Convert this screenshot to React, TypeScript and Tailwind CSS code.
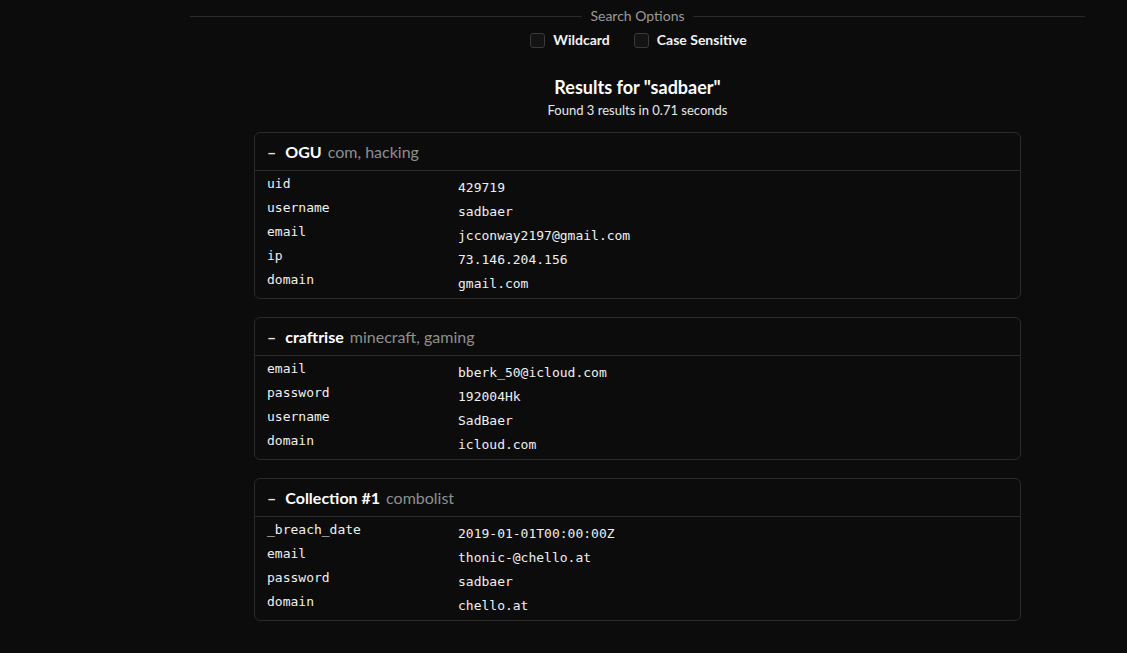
const sans = "font-['Lato','Segoe_UI','Noto_Sans',sans-serif]";
const mono = "font-['DejaVu_Sans_Mono','Liberation_Mono',monospace]";

type Breach = {
  name: string;
  tags: string;
  fields: [string, string][];
};

const breaches: Breach[] = [
  {
    name: "OGU",
    tags: "com, hacking",
    fields: [
      ["uid", "429719"],
      ["username", "sadbaer"],
      ["email", "jcconway2197@gmail.com"],
      ["ip", "73.146.204.156"],
      ["domain", "gmail.com"],
    ],
  },
  {
    name: "craftrise",
    tags: "minecraft, gaming",
    fields: [
      ["email", "bberk_50@icloud.com"],
      ["password", "192004Hk"],
      ["username", "SadBaer"],
      ["domain", "icloud.com"],
    ],
  },
  {
    name: "Collection #1",
    tags: "combolist",
    fields: [
      ["_breach_date", "2019-01-01T00:00:00Z"],
      ["email", "thonic-@chello.at"],
      ["password", "sadbaer"],
      ["domain", "chello.at"],
    ],
  },
];

function Option({ label }: { label: string }) {
  return (
    <label className="flex h-5 items-center gap-2">
      <span className="h-[15px] w-[15px] rounded-[3px] border border-[#3a3a3a] bg-[#141414]" />
      <span className="text-[14px] leading-5 font-bold text-[#f2f2f2]">{label}</span>
    </label>
  );
}

function BreachCard({ breach }: { breach: Breach }) {
  return (
    <div className="rounded-md border border-[#2a2a2a]">
      <div className="flex h-[38px] items-center gap-[9px] border-b border-[#2a2a2a] px-3 pt-px text-[16px] leading-5">
        <span className="font-bold text-[#e5e5e5]">–</span>
        <span className="font-bold text-white">{breach.name}</span>
        <span className="-ml-[3px] text-[#8f8f8f]">{breach.tags}</span>
      </div>
      <div className={`px-3 pt-[3px] pb-[4px] text-[13px] text-[#f0f0f0] ${mono}`}>
        {breach.fields.map(([key, value]) => (
          <div key={key} className="flex h-6">
            <div className="w-[191px] leading-[20px]">{key}</div>
            <div className="pt-1 leading-[20px]">{value}</div>
          </div>
        ))}
      </div>
    </div>
  );
}

export default function App() {
  return (
    <div className={`min-h-[653px] bg-[#0c0c0c] text-white ${sans}`}>
      <div className="ml-[190px] w-[895px] pt-[6px]">
        {/* Search options divider */}
        <div className="flex h-5 items-center gap-2">
          <div className="h-px flex-1 bg-[#2a2a2a]" />
          <span className="text-[14px] leading-5 text-[#9a9a9a]">Search Options</span>
          <div className="h-px flex-1 bg-[#2a2a2a]" />
        </div>
        <div className="mt-[4px] flex justify-center gap-6 pl-[2px]">
          <Option label="Wildcard" />
          <Option label="Case Sensitive" />
        </div>

        {/* Results summary */}
        <div className="mt-[25px] text-center">
          <h2 className="text-[18px] font-bold leading-[24px]">Results for "sadbaer"</h2>
          <p className="text-[13px] leading-[22px] text-[#e8e8e8]">Found 3 results in 0.71 seconds</p>
        </div>

        <div className="mx-auto mt-[11px] flex w-[767px] flex-col gap-[18px]">
          {breaches.map((b) => (
            <BreachCard key={b.name} breach={b} />
          ))}
        </div>
      </div>
    </div>
  );
}
